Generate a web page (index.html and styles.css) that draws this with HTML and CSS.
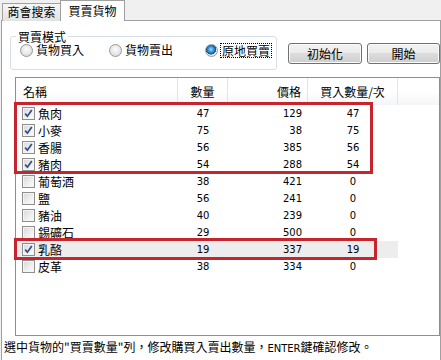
FILE: index.html
```html
<!DOCTYPE html>
<html>
<head>
<meta charset="utf-8">
<link rel="stylesheet" href="styles.css">
</head>
<body>
<div class="tabs">
  <div class="tab">商會搜索</div>
  <div class="tab active">買賣貨物</div>
</div>
<div class="panel">
  <div class="top">
    <fieldset class="group">
      <legend>買賣模式</legend>
      <div class="radios">
        <div class="opt"><span class="radio"></span><span>貨物買入</span></div>
        <div class="opt"><span class="radio"></span><span>貨物賣出</span></div>
        <div class="opt"><span class="radio on"></span><span class="focus">原地買賣</span></div>
      </div>
    </fieldset>
    <div class="btns">
      <button class="btn b1">初始化</button>
      <button class="btn b2">開始</button>
    </div>
  </div>
  <div class="list">
    <div class="row head">
      <div class="c name">名稱</div>
      <div class="c qty">數量</div>
      <div class="c price">價格</div>
      <div class="c buy">買入數量/次</div>
      <div class="c fill"></div>
    </div>
    <div class="row"><div class="c name"><span class="cb on"></span>魚肉</div><div class="c qty num">47</div><div class="c price num">129</div><div class="c buy num">47</div><div class="c fill"></div></div>
    <div class="row"><div class="c name"><span class="cb on"></span>小麥</div><div class="c qty num">75</div><div class="c price num">38</div><div class="c buy num">75</div><div class="c fill"></div></div>
    <div class="row"><div class="c name"><span class="cb on"></span>香腸</div><div class="c qty num">56</div><div class="c price num">385</div><div class="c buy num">56</div><div class="c fill"></div></div>
    <div class="row"><div class="c name"><span class="cb on"></span>豬肉</div><div class="c qty num">54</div><div class="c price num">288</div><div class="c buy num">54</div><div class="c fill"></div></div>
    <div class="row"><div class="c name"><span class="cb"></span>葡萄酒</div><div class="c qty num">38</div><div class="c price num">421</div><div class="c buy num">0</div><div class="c fill"></div></div>
    <div class="row"><div class="c name"><span class="cb"></span>鹽</div><div class="c qty num">56</div><div class="c price num">241</div><div class="c buy num">0</div><div class="c fill"></div></div>
    <div class="row"><div class="c name"><span class="cb"></span>豬油</div><div class="c qty num">40</div><div class="c price num">239</div><div class="c buy num">0</div><div class="c fill"></div></div>
    <div class="row"><div class="c name"><span class="cb"></span>錫礦石</div><div class="c qty num">29</div><div class="c price num">500</div><div class="c buy num">0</div><div class="c fill"></div></div>
    <div class="row sel"><div class="c name"><span class="cb on"></span>乳酪</div><div class="c qty num">19</div><div class="c price num">337</div><div class="c buy num">19</div><div class="c fill"></div></div>
    <div class="row"><div class="c name"><span class="cb"></span>皮革</div><div class="c qty num">38</div><div class="c price num">334</div><div class="c buy num">0</div><div class="c fill"></div></div>
    <div class="mark m1"></div>
    <div class="mark m2"></div>
  </div>
  <div class="status">選中貨物的"買賣數量"列，修改購買入賣出數量，<span class="latin">ENTER</span>鍵確認修改。</div>
</div>
</body>
</html>
```

FILE: styles.css
```css
* { box-sizing: border-box; }
body {
  margin: 0;
  width: 441px;
  height: 360px;
  overflow: hidden;
  background: #f0f0f0;
  font-family: "Noto Sans CJK TC", "Noto Sans CJK SC", sans-serif;
  font-size: 12px;
  color: #000;
}
.tabs {
  display: flex;
  align-items: flex-end;
  height: 21px;
  padding-left: 2px;
}
.tab {
  height: 18px;
  width: 59px;
  border: 1px solid #a0a0a0;
  border-bottom: none;
  background: linear-gradient(#f6f6f6, #e2e2e2);
  line-height: 16px;
  text-align: center;
}
.tab.active {
  height: 21px;
  width: 65px;
  margin-left: -1px;
  background: #fff;
  position: relative;
  z-index: 1;
  line-height: 19px;
}
.panel {
  margin-top: -1px;
  margin-left: 1px;
  height: 340px;
  border: 1px solid #a0a0a0;
  border-bottom: none;
  background: #fff;
}
.top {
  display: flex;
  align-items: flex-start;
}
.group {
  margin: 9px 0 0 8px;
  width: 268px;
  padding: 0 0 12px 0;
  border: 1px solid #d5dfe5;
  border-radius: 3px;
}
.group legend {
  margin-left: 5px;
  padding: 0 2px;
  line-height: 13px;
}
.radios {
  display: grid;
  grid-template-columns: 89px 96px auto;
  padding-left: 9px;
  height: 14px;
  line-height: 14px;
}
.opt {
  display: flex;
  align-items: center;
}
.radio {
  width: 13px;
  height: 13px;
  border-radius: 50%;
  border: 1px solid #999;
  background: radial-gradient(circle at 50% 40%, #fdfdfd 0%, #e6e6e6 55%, #cfcfcf 100%);
  margin-right: 3px;
  flex: none;
}
.radio.on {
  background:
    radial-gradient(circle at 45% 40%, #9fdcff 0%, #2a8ad0 35%, #15507f 55%, transparent 60%),
    radial-gradient(circle, #f7f7f7 0%, #dcdcdc 100%);
}
.focus {
  outline: 1px dotted #000;
  padding: 0 1px;
  line-height: 13px;
}
.btns {
  display: flex;
  gap: 5px;
  margin: 22px 0 0 11px;
}
.btn {
  height: 21px;
  padding: 0;
  font-family: inherit;
  font-size: 12px;
  color: #000;
  border: 1px solid #707070;
  border-radius: 3px;
  background: linear-gradient(#f2f2f2 0%, #ebebeb 50%, #dddddd 50%, #cfcfcf 100%);
  box-shadow: inset 0 0 0 1px #fbfbfb;
}
.b1 { width: 74px; }
.b2 { width: 73px; }
.list {
  position: relative;
  margin: 7px 0 0 13px;
  height: 259px;
  border: 1px solid #8e8f8f;
  background: #fff;
}
.row {
  display: grid;
  grid-template-columns: 162px 50px 80px 90px 1fr;
  height: 17px;
  line-height: 17px;
}
.row.head {
  height: 27px;
  line-height: 28px;
  background: linear-gradient(#ffffff 0%, #ffffff 50%, #f4f5f7 100%);
}
.head .c {
  border-right: 1px solid #e3e5e8;
}
.head .c.fill { border-right: none; }
.c { white-space: nowrap; overflow: hidden; }
.name {
  display: flex;
  align-items: center;
  padding-left: 6px;
}
.head .name { padding-left: 7px; display: block; }
.qty { text-align: center; }
.price { text-align: right; padding-right: 6px; }
.buy { text-align: center; }
.num {
  font-family: "DejaVu Sans", sans-serif;
  font-size: 10px;
}
.sel .name, .sel .qty, .sel .price, .sel .buy { background: #ededed; }
.cb {
  width: 13px;
  height: 13px;
  margin-right: 3px;
  flex: none;
  border: 1px solid #8f8f8f;
  background: linear-gradient(135deg, #d6d6d6 0%, #f0f0f0 60%, #fdfdfd 100%);
  box-shadow: inset 0 0 0 1px #f4f4f4;
}
.cb.on {
  background:
    url("data:image/svg+xml,%3Csvg xmlns='http://www.w3.org/2000/svg' width='11' height='11'%3E%3Cpath d='M2.2 5.6 L4.4 8.2 L8.8 2' fill='none' stroke='%23334a8f' stroke-width='1.7'/%3E%3C/svg%3E") center/11px 11px no-repeat,
    linear-gradient(135deg, #d6d6d6 0%, #f0f0f0 60%, #fdfdfd 100%);
}
.mark {
  position: absolute;
  border: 3px solid #c6252e;
}
.m1 { left: -2px; top: 24px; width: 359px; height: 72px; }
.m2 { left: -2px; top: 160px; width: 363px; height: 22px; }
.status {
  padding-left: 2px;
  line-height: 16px;
  margin-top: 3px;
}
.latin {
  font-family: "DejaVu Sans", sans-serif;
  font-size: 10px;
}
```
